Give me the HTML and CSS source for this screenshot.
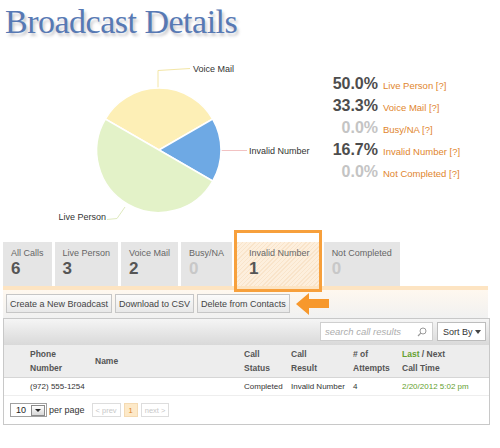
FILE: index.html
```html
<!DOCTYPE html>
<html>
<head>
<meta charset="utf-8">
<title>Broadcast Details</title>
<link rel="stylesheet" href="styles.css">
</head>
<body>
<div class="page">
  <h1 class="title">Broadcast Details</h1>

  <section class="summary">
    <svg class="pie" width="330" height="200" viewBox="0 42 330 200">
      <polyline points="158,88 158,70.5 190,68.5" class="lead lead-vm"/>
      <line x1="220" y1="150.5" x2="247" y2="150.5" class="lead lead-in"/>
      <polyline points="107,219.5 117,218.5 125,207" class="lead lead-lp"/>
      <path d="M159,150 L105.31,119 A62,62 0 0,1 212.69,119 Z" class="slice s-vm"/>
      <path d="M159,150 L212.69,119 A62,62 0 0,1 212.69,181 Z" class="slice s-in"/>
      <path d="M159,150 L212.69,181 A62,62 0 1,1 105.31,119 Z" class="slice s-lp"/>
      <text x="193" y="72" class="pie-label">Voice Mail</text>
      <text x="249" y="154" class="pie-label">Invalid Number</text>
      <text x="106" y="220" class="pie-label" text-anchor="end">Live Person</text>
    </svg>
    <div class="stats">
      <div class="stat"><span class="pct">50.0%</span><span class="stat-label">Live Person [?]</span></div>
      <div class="stat"><span class="pct">33.3%</span><span class="stat-label">Voice Mail [?]</span></div>
      <div class="stat"><span class="pct pct-zero">0.0%</span><span class="stat-label">Busy/NA [?]</span></div>
      <div class="stat"><span class="pct">16.7%</span><span class="stat-label">Invalid Number [?]</span></div>
      <div class="stat"><span class="pct pct-zero">0.0%</span><span class="stat-label">Not Completed [?]</span></div>
    </div>
  </section>

  <div class="tabs">
    <div class="tab"><div class="tab-label">All Calls</div><div class="tab-count">6</div></div>
    <div class="tab"><div class="tab-label">Live Person</div><div class="tab-count">3</div></div>
    <div class="tab"><div class="tab-label">Voice Mail</div><div class="tab-count">2</div></div>
    <div class="tab"><div class="tab-label">Busy/NA</div><div class="tab-count zero">0</div></div>
    <div class="tab tab-active"><div class="tab-label">Invalid Number</div><div class="tab-count">1</div><span class="highlight"></span></div>
    <div class="tab"><div class="tab-label">Not Completed</div><div class="tab-count zero">0</div></div>
  </div>

  <div class="actions">
    <button class="btn">Create a New Broadcast</button>
    <button class="btn">Download to CSV</button>
    <button class="btn">Delete from Contacts</button>
    <svg class="arrow" width="33" height="22" viewBox="0 0 33 22">
      <polygon points="0,11 13,0 13,6 33,6 33,15 13,15 13,22" fill="#f7982c"/>
    </svg>
  </div>

  <div class="panel">
    <div class="panel-bar">
      <div class="search">
        <span class="search-text">search call results</span>
        <svg class="search-icon" width="10" height="10" viewBox="0 0 10 10">
          <circle cx="6" cy="4" r="3" fill="none" stroke="#9a9a9a" stroke-width="1"/>
          <line x1="3.8" y1="6.2" x2="1" y2="9" stroke="#9a9a9a" stroke-width="1.2"/>
        </svg>
      </div>
      <div class="sort"><span>Sort By</span><span class="caret"></span></div>
    </div>
    <div class="grid head">
      <div>Phone<br>Number</div>
      <div>Name</div>
      <div>Call<br>Status</div>
      <div>Call<br>Result</div>
      <div># of<br>Attempts</div>
      <div><span class="green">Last</span> / Next<br>Call Time</div>
    </div>
    <div class="grid row">
      <div>(972) 555-1254</div>
      <div></div>
      <div>Completed</div>
      <div>Invalid Number</div>
      <div>4</div>
      <div class="green">2/20/2012 5:02 pm</div>
    </div>
    <div class="pager">
      <div class="per-select"><span>10</span><span class="dd"><span class="dd-caret"></span></span></div>
      <span class="per-label">per page</span>
      <span class="pg pg-off">&lt; prev</span>
      <span class="pg pg-cur">1</span>
      <span class="pg pg-off">next &gt;</span>
    </div>
  </div>
</div>
</body>
</html>
```

FILE: styles.css
```css
* { box-sizing: border-box; }

body {
  margin: 0;
  background: #fff;
  color: #333;
  font-family: "Liberation Sans", Arial, sans-serif;
}

.page {
  width: 500px;
  height: 448px;
  overflow: hidden;
}

.title {
  margin: 0;
  height: 42px;
  padding: 2px 0 0 5px;
  font: normal 34px/40px "Liberation Serif", "Times New Roman", serif;
  letter-spacing: -0.5px;
  color: #5779b4;
  text-shadow: 2px 3px 3px rgba(60, 60, 80, 0.28);
}

/* chart + stats */
.summary {
  display: flex;
  height: 200px;
}

.pie {
  display: block;
  flex: none;
}

.slice { stroke: #fff; stroke-width: 1.5; }
.s-vm { fill: #fdefb6; }
.s-in { fill: #6ea9e4; }
.s-lp { fill: #e3f2c8; }

.lead { fill: none; stroke-width: 1; }
.lead-vm { stroke: #f3e6a6; }
.lead-in { stroke: #f2c2c2; }
.lead-lp { stroke: #dfeabf; }

.pie-label {
  font-family: "Liberation Sans", Arial, sans-serif;
  font-size: 9px;
  fill: #333;
}

.stats {
  padding-top: 30.5px;
}

.stat {
  display: flex;
  align-items: baseline;
  height: 22px;
  line-height: 22px;
}

.pct {
  width: 48px;
  margin-right: 5px;
  text-align: right;
  font-weight: bold;
  font-size: 16px;
  color: #4d4d4d;
}

.pct-zero { color: #c4c4c4; }

.stat-label {
  font-size: 9.5px;
  color: #df862e;
}

/* tabs */
.tabs {
  display: flex;
  gap: 3px;
  padding-left: 3px;
  height: 44px;
}

.tab {
  position: relative;
  background: #e5e5e5;
  padding: 5px 8px 0 8px;
}

.tab-label {
  font-size: 9px;
  line-height: 12px;
  color: #666;
  white-space: nowrap;
}

.tab-count {
  font-weight: bold;
  font-size: 17px;
  line-height: 20px;
  color: #555;
}

.tab-count.zero { color: #c8c8c8; }

.tab-active {
  padding: 5px 11px 0 14px;
  background: repeating-linear-gradient(135deg, #fdefdd 0, #fdefdd 2px, #f9e4ca 2px, #f9e4ca 3px);
}

.highlight {
  position: absolute;
  left: -1px;
  right: -1px;
  top: -12px;
  bottom: -6px;
  border: 3px solid #f7a03c;
  pointer-events: none;
}

/* action bar */
.actions {
  display: flex;
  align-items: center;
  gap: 3px;
  margin-left: 3px;
  width: 485px;
  height: 32px;
  padding: 4px 3px 5px;
  border-top: 4px solid #fde4c2;
  background: linear-gradient(#fff8ef, #f1f1f1);
}

.btn {
  height: 19px;
  padding: 0 3px;
  border: 1px solid #c6c6c6;
  border-radius: 0;
  background: linear-gradient(#fbfbfb, #e8e8e8);
  font: 9px "Liberation Sans", Arial, sans-serif;
  color: #444;
}

.arrow {
  flex: none;
  margin-left: 3px;
}

/* table panel */
.panel {
  margin-left: 3px;
  width: 487px;
  border: 1px solid #c8c8c8;
}

.panel-bar {
  display: flex;
  justify-content: flex-end;
  align-items: flex-start;
  gap: 4px;
  height: 26px;
  padding: 3px 3px 0;
  background: linear-gradient(#f5f5f5, #d9d9d9);
}

.search {
  width: 113px;
  height: 19px;
  display: flex;
  align-items: center;
  justify-content: space-between;
  padding: 0 5px 0 4px;
  background: #fff;
  border: 1px solid #cfcfcf;
}

.search-text {
  font-style: italic;
  font-size: 9.5px;
  color: #adadad;
}

.sort {
  width: 49px;
  height: 19px;
  display: flex;
  align-items: center;
  justify-content: space-between;
  padding: 0 4px 0 5px;
  background: #fff;
  border: 1px solid #bdbdbd;
  font-size: 9px;
  color: #333;
}

.caret {
  width: 0;
  height: 0;
  border-left: 3px solid transparent;
  border-right: 3px solid transparent;
  border-top: 4px solid #444;
}

.grid {
  display: grid;
  grid-template-columns: 65px 149px 47px 62px 49px 1fr;
  align-items: center;
  padding-left: 26px;
}

.head {
  height: 33px;
  background: #ededed;
  border-bottom: 1px solid #d6d6d6;
  font-weight: bold;
  font-size: 8.5px;
  line-height: 14px;
  color: #555;
}

.row {
  height: 18px;
  border-bottom: 1px solid #eee;
  font-size: 8px;
  color: #333;
  white-space: nowrap;
}

.green { color: #65a02e; }

.pager {
  display: flex;
  align-items: center;
  height: 28px;
  padding-left: 6px;
}

.per-select {
  width: 37px;
  height: 14px;
  display: flex;
  align-items: center;
  justify-content: space-between;
  padding: 0 1px 0 5px;
  border: 1px solid #a0a0a0;
  font-size: 9px;
  color: #222;
}

.dd {
  width: 14px;
  height: 11px;
  display: flex;
  align-items: center;
  justify-content: center;
  border: 1px solid #8a8a8a;
  background: linear-gradient(#fff, #d8d8d8);
}

.dd-caret {
  width: 0;
  height: 0;
  border-left: 3px solid transparent;
  border-right: 3px solid transparent;
  border-top: 3px solid #222;
}

.per-label {
  margin: 0 7px 0 2px;
  font-size: 9px;
  color: #333;
}

.pg {
  height: 14px;
  display: flex;
  align-items: center;
  margin-right: 3px;
  padding: 0 3px;
  border: 1px solid #ddd;
  font-size: 7.5px;
  color: #c8c8c8;
}

.pg-cur {
  padding: 0 4px;
  background: #fde9c8;
  border-color: #f4dab2;
  color: #d98028;
}
```
